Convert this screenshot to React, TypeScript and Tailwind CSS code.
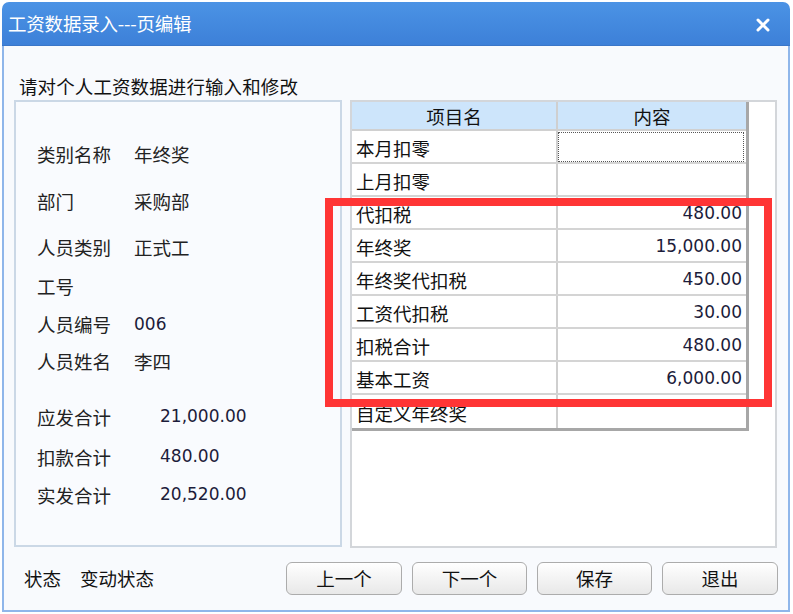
import React from "react";

const cjk = { fontFamily: '"Noto Sans CJK SC", "Noto Sans", sans-serif' };
const num = { fontFamily: '"DejaVu Sans", "Noto Sans CJK SC", sans-serif' };

type Row = { name: string; value: string; focus?: boolean };

const rows: Row[] = [
  { name: "本月扣零", value: "", focus: true },
  { name: "上月扣零", value: "" },
  { name: "代扣税", value: "480.00" },
  { name: "年终奖", value: "15,000.00" },
  { name: "年终奖代扣税", value: "450.00" },
  { name: "工资代扣税", value: "30.00" },
  { name: "扣税合计", value: "480.00" },
  { name: "基本工资", value: "6,000.00" },
  { name: "自定义年终奖", value: "" },
];

function InfoRow({
  label,
  value,
  labelW,
  mt,
  numeric,
  lift,
}: {
  label: string;
  value: string;
  labelW: string;
  mt: string;
  numeric?: boolean;
  lift?: boolean;
}) {
  return (
    <div className={`flex h-[28px] items-center ${mt}`}>
      <div className={`${labelW} shrink-0 text-[18.5px] text-[#222]`} style={cjk}>
        {label}
      </div>
      <div
        className={
          numeric
            ? `text-[17px] text-[#1c1c3a] ${lift ? "-mt-[3px]" : ""}`
            : "text-[18.5px] text-[#222]"
        }
        style={numeric ? num : cjk}
      >
        {value}
      </div>
    </div>
  );
}

function Btn({ label, w }: { label: string; w: string }) {
  return (
    <button
      className={`${w} h-[33px] rounded-[6px] border border-[#acacac] bg-gradient-to-b from-white to-[#e8e8e8] text-[18.5px] text-[#111] flex items-center justify-center`}
      style={cjk}
    >
      {label}
    </button>
  );
}

export default function App() {
  return (
    <div className="relative w-[793px] h-[614px] bg-white overflow-hidden" style={cjk}>
      <div className="absolute left-[2px] top-[2px] w-[788px] h-[610px] flex flex-col rounded-t-[7px] overflow-hidden">
        {/* title bar */}
        <div className="h-[44px] shrink-0 flex items-center justify-between bg-gradient-to-b from-[#4b93e5] to-[#3d80d8] border-b border-[#3a76c8] pl-[6px] pr-[20px]">
          <span className="text-white text-[18.5px] tracking-[-0.2px]" style={cjk}>
            工资数据录入---页编辑
          </span>
          <svg width="14" height="14" viewBox="0 0 14 14" className="mt-[2px]">
            <path d="M2 2 L12 12 M12 2 L2 12" stroke="white" strokeWidth="3" strokeLinecap="round" />
          </svg>
        </div>
        {/* body */}
        <div className="flex-1 flex flex-col bg-[#f8fafd] border-l-2 border-r-2 border-b-2 border-[#8fb6ea] pl-[10px] pr-[10px]">
          <div className="mt-[30px] h-[22px] pl-[5px] flex items-center text-[18.5px] text-[#111] tracking-[0.1px]">
            请对个人工资数据进行输入和修改
          </div>
          <div className="mt-[2px] flex gap-[8px]">
            {/* left panel */}
            <div className="w-[328px] h-[447px] border-2 border-[#cbd8e6] bg-[#f9fbfe] pl-[21px] flex flex-col">
              <InfoRow label="类别名称" value="年终奖" labelW="w-[97px]" mt="mt-[39px]" />
              <InfoRow label="部门" value="采购部" labelW="w-[97px]" mt="mt-[19px]" />
              <InfoRow label="人员类别" value="正式工" labelW="w-[97px]" mt="mt-[18px]" />
              <InfoRow label="工号" value="" labelW="w-[97px]" mt="mt-[11px]" />
              <InfoRow label="人员编号" value="006" labelW="w-[97px]" mt="mt-[10px]" numeric />
              <InfoRow label="人员姓名" value="李四" labelW="w-[97px]" mt="mt-[9px]" />
              <InfoRow label="应发合计" value="21,000.00" labelW="w-[123px]" mt="mt-[28px]" numeric lift />
              <InfoRow label="扣款合计" value="480.00" labelW="w-[123px]" mt="mt-[12px]" numeric lift />
              <InfoRow label="实发合计" value="20,520.00" labelW="w-[123px]" mt="mt-[10px]" numeric lift />
            </div>
            {/* right panel */}
            <div className="w-[427px] h-[448px] border-2 border-[#d3d6da] bg-white">
              <div className="w-[397px] border-r-[3px] border-b-[3px] border-[#a7a7a7]">
                <div className="flex h-[29px] bg-[#cde5fb] border-b-2 border-[#d0d0d0]">
                  <div className="w-[206px] flex items-center justify-center pt-[2px] text-[18.5px] text-[#111] border-r-2 border-[#cfcfcf]">
                    项目名
                  </div>
                  <div className="flex-1 flex items-center justify-center pt-[2px] text-[18.5px] text-[#111]">
                    内容
                  </div>
                </div>
                {rows.map((r, i) => (
                  <div
                    key={r.name}
                    className={`flex h-[33px] ${i < rows.length - 1 ? "border-b-2 border-[#d4d4d4]" : ""}`}
                  >
                    <div className="w-[206px] flex items-center pl-[4px] pt-[4px] text-[18.5px] text-[#111] border-r-2 border-[#cfcfcf]">
                      {r.name}
                    </div>
                    <div className="flex-1 flex items-center justify-end pr-[2px]">
                      {r.focus ? (
                        <div className="w-full h-[30px] border border-dotted border-[#555]" />
                      ) : (
                        <span className="text-[17px] text-[#1c1c3a] pr-[2px] pt-[3px]" style={num}>
                          {r.value}
                        </span>
                      )}
                    </div>
                  </div>
                ))}
              </div>
            </div>
          </div>
          {/* bottom bar */}
          <div className="mt-[14px] flex items-center">
            <div className="w-[273px] pl-[10px] flex items-center text-[18.5px] text-[#111]">
              <span className="w-[56px]">状态</span>
              <span>变动状态</span>
            </div>
            <div className="flex gap-[10px]">
              <Btn label="上一个" w="w-[116px]" />
              <Btn label="下一个" w="w-[115px]" />
              <Btn label="保存" w="w-[115px]" />
              <Btn label="退出" w="w-[116px]" />
            </div>
          </div>
        </div>
      </div>
      {/* red annotation box */}
      <div className="absolute left-[325px] top-[198px] w-[447px] h-[209px] border-[8px] border-[#ff3535]" />
    </div>
  );
}
